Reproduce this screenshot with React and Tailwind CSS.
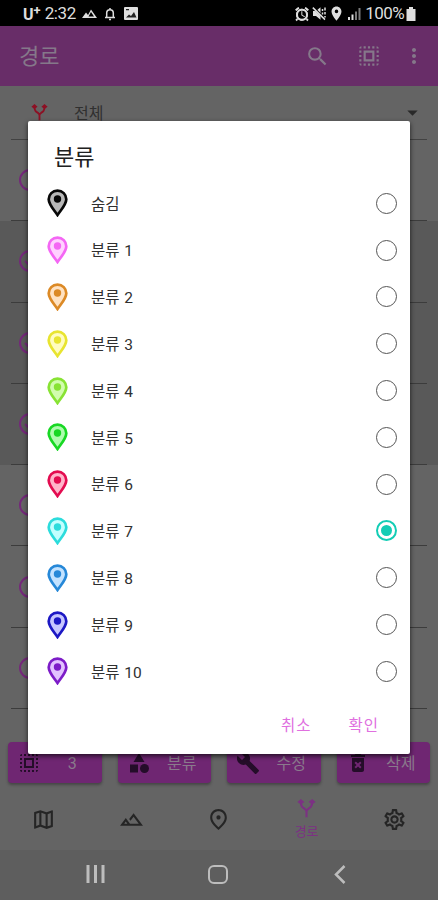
import React from "react";
import {
    MdAlarm,
    MdArrowDropDown,
    MdBuild,
    MdCategory,
    MdDeleteForever,
    MdLocationOn,
    MdMoreVert,
    MdOutlineMap,
    MdOutlinePlace,
    MdOutlineSettings,
    MdOutlineTerrain,
    MdSearch,
    MdSelectAll,
} from "react-icons/md";

const categories = [
    { name: "숨김", color: "#080808", fill: "#b8b8b8" },
    { name: "분류 1", color: "#f467f4", fill: "#ffd2ff" },
    { name: "분류 2", color: "#dc8a26", fill: "#ffe2c2" },
    { name: "분류 3", color: "#e8e430", fill: "#fffcc0" },
    { name: "분류 4", color: "#88e334", fill: "#d2fcae" },
    { name: "분류 5", color: "#18d824", fill: "#aefcae" },
    { name: "분류 6", color: "#e30c50", fill: "#ffb4ca" },
    { name: "분류 7", color: "#2cdcdc", fill: "#c2ffff" },
    { name: "분류 8", color: "#2688d8", fill: "#c2e2ff" },
    { name: "분류 9", color: "#1c18c4", fill: "#c6c6ff" },
    { name: "분류 10", color: "#7d1cc8", fill: "#e2c2ff" },
];

const routes = [
    { id: 1, checked: false },
    { id: 2, checked: true },
    { id: 3, checked: true },
    { id: 4, checked: true },
    { id: 5, checked: false },
    { id: 6, checked: false },
    { id: 7, checked: false },
];

const Pin = ({ color, fill }) => (
    <svg width="21" height="28" viewBox="0 0 21 28">
        <path d="M10.500 1.600C5.600 1.600 1.700 5.400 1.700 10.200c0 5.400 5.800 11.300 8.800 15.800 3-4.500 8.800-10.400 8.800-15.800 0-4.800-3.900-8.600-8.800-8.600z" fill={fill} stroke={color} strokeWidth="2.700" />
        <circle cx="10.500" cy="10" r="3.700" fill={color} />
    </svg>
);

const RouteIcon = ({ size = 22 }) => (
    <svg width={size} height={size} viewBox="0 0 22 22" fill="none" stroke="currentColor">
        <path d="M4.500 3.500c0 5 1.500 6 4.500 8 1.500 1 2 2 2 3.500v6M17.500 3.500c0 5-1.500 6-4.500 8-1 .7-2 1.500-2 3" strokeWidth="2.400" />
        <path d="M4.500 0l4 3.500-4 3-4-3zM17.500 0l4 3.500-4 3-4-3z" fill="currentColor" stroke="none" />
    </svg>
);

const MuteIcon = () => (
    <svg width="15" height="15" viewBox="0 0 15 15" fill="currentColor">
        <path d="M1 5h3l4.500-3.800v12.600L4 10H1z" />
        <path d="M1 1l12.500 12.500" stroke="#000" strokeWidth="2.200" />
        <path d="M.8 1.600 13 13.600M10.500 3v2M10.500 6.500v2M13 1.500v3M13 6v2.500M13 10v1.500" stroke="currentColor" strokeWidth="1.500" fill="none" />
    </svg>
);

const AlarmIcon = () => (
    <span className="relative">
        <MdAlarm size={16} />
        <svg className="absolute left-0 top-0" width="16" height="16" viewBox="0 0 16 16" fill="none" stroke="currentColor">
            <circle cx="8" cy="8.700" r="5" strokeWidth="2" />
            <path d="M1.800 4.300l3-2.500M14.200 4.300l-3-2.500M3.500 13l-1.500 1.500M12.500 13l1.500 1.500" strokeWidth="1.800" />
        </svg>
    </span>
);

const StatusBar = () => (
    <header className="flex h-[26px] items-center justify-between bg-black pl-[23px] pr-[22px] pt-px text-[#dedede]">
        <div className="flex items-center">
            <span className="pt-[2px] text-[16px] font-bold leading-none">U</span>
            <span className="mb-[7px] text-[13px] font-bold leading-none">+</span>
            <span className="ml-[4px] text-[17px] leading-none tracking-[-0.4px]">2:32</span>
            <svg className="ml-[6px]" width="15" height="11" viewBox="0 0 15 11" fill="currentColor">
                <path fillRule="evenodd" d="M0 10l4-5.500L6 7l3-5.500L15 10zM9 4L6.500 8.500h5.500z" />
            </svg>
            <svg className="ml-[7px]" width="12" height="14" viewBox="0 0 12 14" fill="none" stroke="currentColor" strokeWidth="1.500">
                <path d="M1 10.500h10M2.700 10V6a3.300 3.300 0 0 1 6.600 0v4M6 1v2M5 12.500h2" />
            </svg>
            <svg className="ml-[8px]" width="14" height="13" viewBox="0 0 14 13">
                <rect width="14" height="13" rx="1" fill="currentColor" />
                <path d="M2 10.500l3-3 2 1.500 3-4 2.500 5.500zM2 2h3v1.200H2z" fill="#222" />
            </svg>
        </div>
        <div className="flex items-center">
            <AlarmIcon />
            <span className="ml-[2px]"><MuteIcon /></span>
            <MdLocationOn className="ml-[1px]" size={17} />
            <svg className="ml-[3px]" width="13" height="12" viewBox="0 0 13 12" fill="currentColor">
                <path d="M0 9h2v3H0zM3.500 6.500h2V12h-2z" />
                <path d="M7 3.500h2V12H7zM10.500 0h2v12h-2z" opacity=".55" />
            </svg>
            <span className="ml-[4px] text-[17px] leading-none tracking-[-0.6px]">100%</span>
            <svg className="ml-[2px]" width="10" height="14" viewBox="0 0 10 14" fill="currentColor">
                <path d="M3 0h4v2h2.500v12H.5V2H3z" />
            </svg>
        </div>
    </header>
);

const AppBar = () => (
    <div className="flex h-[60px] items-center bg-[#682d68] pl-[19px] text-[#85788a]">
        <h1 className="flex-1 pt-[2px] text-[22px] leading-none">경로</h1>
        <MdSearch size={25} />
        <MdSelectAll className="ml-[26px]" size={26} />
        <MdMoreVert className="ml-[20px] mr-[12px]" size={24} />
    </div>
);

const Filter = () => (
    <div className="mx-[11px] flex h-[54px] items-center border-b border-[#424242]">
        <span className="ml-[20px] text-[#8d1024]"><RouteIcon size={17} /></span>
        <span className="ml-[26px] flex-1 pt-[3px] text-[16px] leading-none text-[#303030]">전체</span>
        <MdArrowDropDown className="mr-[2px] text-[#292929]" size={25} />
    </div>
);

const RouteRow = ({ checked }) => (
    <div className={checked ? "h-[81.3px] bg-[#595959] px-[11px]" : "h-[81.3px] px-[11px]"}>
        <div className="flex h-full items-center border-b border-[#3c3c3c] pl-[8px]">
            <span className="flex h-[22px] w-[22px] items-center justify-center rounded-full border-2 border-[#74287a] text-[#74287a]">
                {checked && (
                    <svg width="12" height="12" viewBox="0 0 12 12" fill="none" stroke="currentColor" strokeWidth="2">
                        <path d="M1 6l3.500 3.500L11 3" />
                    </svg>
                )}
            </span>
        </div>
    </div>
);

const ActionButton = ({ icon, label }) => (
    <div className="flex h-[41px] items-center rounded-[4px] bg-[#6f2672] pl-[9px] shadow-[0_2px_3px_#00000050]">
        <span className="text-[#240d29]">{icon}</span>
        <span className="flex-1 pl-[2px] pt-[3px] text-center text-[16px] leading-none text-[#8a7a8c]">{label}</span>
    </div>
);

const BottomNav = () => (
    <nav className="grid h-[67px] grid-cols-5 items-center justify-items-center pt-[5px] text-[#252525]">
        <MdOutlineMap size={25} />
        <MdOutlineTerrain size={25} />
        <MdOutlinePlace size={25} />
        <div className="flex flex-col items-center text-[#7c3183]">
            <RouteIcon size={19} />
            <span className="mt-[6px] text-[13px] leading-[15px]">경로</span>
        </div>
        <MdOutlineSettings size={25} />
    </nav>
);

const SystemNav = () => (
    <footer className="grid h-[50px] grid-cols-[190px_55px_190px] items-center justify-items-center bg-[#5e5e5e] text-[#bdbdbd]">
        <svg className="-mt-[2px]" width="19" height="18" viewBox="0 0 19 18" stroke="currentColor" strokeWidth="3">
            <path d="M2 0v18M9.500 0v18M17 0v18" />
        </svg>
        <span className="-mt-[2px] h-[19px] w-[20px] rounded-[6px] border-2 border-[#bdbdbd]"></span>
        <svg className="-mt-[2px]" width="12" height="19" viewBox="0 0 12 19" fill="none" stroke="currentColor" strokeWidth="2.500">
            <path d="M10.500 1L2 9.500l8.500 8.500" />
        </svg>
    </footer>
);

const CategoryDialog = ({ selected }) => (
    <div className="absolute left-[28px] top-[121px] flex h-[633px] w-[382px] flex-col rounded-[2px] bg-white shadow-[0_2px_5px_#000000b0]">
        <h2 className="h-[59px] pl-[26px] pt-[23px] text-[22px] font-normal leading-[28px] text-[#202020]">분류</h2>
        <ul>
            {categories.map((item) => (
                <li key={item.name} className="flex h-[46.8px] items-center pl-[19px] pr-[13px]">
                    <Pin color={item.color} fill={item.fill} />
                    <span className="ml-[23px] flex-1 pt-[4px] text-[15.500px] leading-none text-[#303030] [word-spacing:1px]">{item.name}</span>
                    {item.name === selected ? (
                        <span className="flex h-[21px] w-[21px] items-center justify-center rounded-full border-2 border-[#12cdb5]">
                            <span className="h-[11px] w-[11px] rounded-full bg-[#12cdb5]"></span>
                        </span>
                    ) : (
                        <span className="h-[21px] w-[21px] rounded-full border-[1.500px] border-[#555]"></span>
                    )}
                </li>
            ))}
        </ul>
        <div className="flex flex-1 items-center justify-end gap-[37px] pr-[31px] pt-[4px] text-[15.500px] leading-none tracking-[1px] text-[#e070df]">
            <button>취소</button>
            <button>확인</button>
        </div>
    </div>
);

const App = () => {
    return (
        <div className="relative flex h-[900px] w-[438px] flex-col overflow-hidden bg-[#646464] font-[Roboto,'Noto_Sans_CJK_KR',sans-serif]">
            <StatusBar />
            <AppBar />
            <Filter />
            <section className="h-[602px]">
                {routes.map((item) => <RouteRow key={item.id} checked={item.checked} />)}
            </section>
            <section className="grid h-[41px] grid-cols-4 gap-[16px] px-[8px]">
                <ActionButton icon={<MdSelectAll size={24} />} label="3" />
                <ActionButton icon={<MdCategory size={24} />} label="분류" />
                <ActionButton icon={<MdBuild size={24} />} label="수정" />
                <ActionButton icon={<MdDeleteForever size={24} />} label="삭제" />
            </section>
            <BottomNav />
            <SystemNav />
            <CategoryDialog selected="분류 7" />
        </div>
    )
}
export default App
